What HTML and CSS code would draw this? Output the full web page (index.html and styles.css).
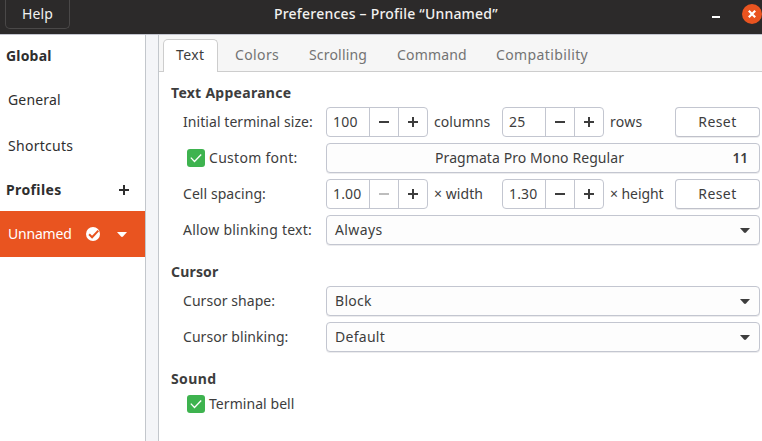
FILE: index.html
```
<!DOCTYPE html>
<html lang="en">
<head>
<meta charset="utf-8">
<title>Preferences – Profile “Unnamed”</title>
<link rel="stylesheet" href="styles.css">
</head>
<body>
<svg class="defs" aria-hidden="true">
  <symbol id="plus" viewBox="0 0 10 10"><path d="M4 0h2v4h4v2H6v4H4V6H0V4h4z"/></symbol>
  <symbol id="minus" viewBox="0 0 10 10"><path d="M0 4h10v2H0z"/></symbol>
  <symbol id="arrow" viewBox="0 0 10 5"><path d="M0 0h10L6 4.5Q5 5.4 4 4.5z"/></symbol>
  <symbol id="check" viewBox="0 0 18 18"><path d="M3.8 8.6l3.7 3.9 6.7-7" fill="none" stroke="#fff" stroke-width="1.3"/></symbol>
</svg>
<div class="window">
  <header class="titlebar">
    <button class="help">Help</button>
    <h1 class="title">Preferences – Profile “Unnamed”</h1>
    <div class="controls">
      <span class="minimize"></span>
      <span class="close"><svg viewBox="0 0 8 8"><path d="M.8.8l6.4 6.4M7.2.8L.8 7.2" stroke="#fff" stroke-width="2.2"/></svg></span>
    </div>
  </header>
  <div class="body">
    <nav class="sidebar">
      <div class="side-head">Global</div>
      <div class="side-item">General</div>
      <div class="side-item ls3">Shortcuts</div>
      <div class="side-head ls4">Profiles<svg class="ic"><use href="#plus"/></svg></div>
      <div class="side-item selected"><span class="profile">Unnamed</span>
        <svg class="default-mark" viewBox="0 0 14 14"><circle cx="7" cy="7" r="7" fill="#fff"/><path d="M3.1 7.2l3 3 6.2-6.6" fill="none" stroke="#e95420" stroke-width="2"/></svg>
        <svg class="arrow"><use href="#arrow"/></svg>
      </div>
    </nav>
    <main class="pane">
      <div class="tabs">
        <div class="tab active ls4">Text</div>
        <div class="tab colors ls4">Colors</div>
        <div class="tab scrolling">Scrolling</div>
        <div class="tab command">Command</div>
        <div class="tab compat ls4">Compatibility</div>
      </div>
      <div class="content">
        <h2 class="ls3">Text Appearance</h2>
        <div class="row">
          <label class="lab ls1">Initial terminal size:</label>
          <div class="spin"><span class="val">100</span><span class="btn"><svg class="ic"><use href="#minus"/></svg></span><span class="btn"><svg class="ic"><use href="#plus"/></svg></span></div>
          <span class="unit ls1">columns</span>
          <div class="spin"><span class="val">25</span><span class="btn"><svg class="ic"><use href="#minus"/></svg></span><span class="btn"><svg class="ic"><use href="#plus"/></svg></span></div>
          <span class="unit ls3">rows</span>
          <button class="reset">Reset</button>
        </div>
        <div class="row">
          <label class="lab checked ls3"><span class="box"><svg><use href="#check"/></svg></span>Custom font:</label>
          <div class="wide font"><span class="fontname">Pragmata Pro Mono Regular</span><span class="size">11</span></div>
        </div>
        <div class="row">
          <label class="lab ls1">Cell spacing:</label>
          <div class="spin"><span class="val">1.00</span><span class="btn off"><svg class="ic"><use href="#minus"/></svg></span><span class="btn"><svg class="ic"><use href="#plus"/></svg></span></div>
          <span class="unit ls1">× width</span>
          <div class="spin"><span class="val">1.30</span><span class="btn"><svg class="ic"><use href="#minus"/></svg></span><span class="btn"><svg class="ic"><use href="#plus"/></svg></span></div>
          <span class="unit ls0">× height</span>
          <button class="reset">Reset</button>
        </div>
        <div class="row">
          <label class="lab blink">Allow blinking text:</label>
          <div class="wide ls4">Always<svg class="arrow"><use href="#arrow"/></svg></div>
        </div>
        <h2>Cursor</h2>
        <div class="row">
          <label class="lab ls1">Cursor shape:</label>
          <div class="wide ls3">Block<svg class="arrow"><use href="#arrow"/></svg></div>
        </div>
        <div class="row">
          <label class="lab ls1">Cursor blinking:</label>
          <div class="wide ls3">Default<svg class="arrow"><use href="#arrow"/></svg></div>
        </div>
        <h2 class="ls4">Sound</h2>
        <div class="row bell">
          <label class="lab checked ls1"><span class="box"><svg><use href="#check"/></svg></span>Terminal bell</label>
        </div>
      </div>
    </main>
  </div>
</div>
</body>
</html>
```
FILE: styles.css
```
* { box-sizing: border-box; }
body {
  margin: 0;
  font: 14px/20px "Noto Sans", "Open Sans", sans-serif;
  letter-spacing: .18px;
  color: #3d3d3d;
  overflow: hidden;
}
.defs { display: none; }
svg { display: block; flex: none; fill: currentColor; }
button { font: inherit; letter-spacing: inherit; color: inherit; padding: 0; }
.window { width: 762px; height: 441px; display: flex; flex-direction: column; background: #fff; }

.titlebar {
  height: 34px; flex: none;
  display: grid; grid-template-columns: 274px 1fr 54px;
  background: #2c2a2a; color: #f2f1f0;
}
.help {
  width: 65px; height: 29px; margin-left: 5px;
  background: none; border: 1px solid #4a4848; border-top: 0; border-radius: 0 0 5px 5px;
  letter-spacing: .08px;
}
.title { margin: 4px 0 0; font-size: 14px; font-weight: 500; letter-spacing: .21px; line-height: 20px; }
.controls { display: flex; padding-left: 4px; }
.minimize { width: 8px; height: 2px; margin: 16px 22px 0 0; background: #fff; }
.close {
  width: 20px; height: 20px; margin-top: 4px; flex: none; border-radius: 50%;
  background: #e95420; display: flex; align-items: center; justify-content: center;
}
.close svg { width: 8px; height: 8px; }

.body { flex: 1; display: flex; background: #f4f5f8; border-top: 1px solid #c3c5cf; }
.sidebar { width: 146px; flex: none; background: #fff; border-right: 1px solid #c3c7cc; color: #2e2e2e; }
.side-head { height: 42px; padding: 0 16px 0 6px; display: flex; align-items: center; justify-content: space-between; font-weight: 700; }
.side-item { height: 46px; padding-left: 8px; display: flex; align-items: center; }
.selected { background: #e95420; color: #fff; }
.profile { width: 78px; letter-spacing: -.2px; }
.default-mark { width: 14px; height: 14px; margin-right: 17px; }

.pane { flex: 1; margin-left: 12px; border-left: 1px solid #c3c7cc; background: #fff; }
.tabs { height: 37px; display: flex; align-items: flex-end; background: #f6f6f6; box-shadow: inset 0 -1px #cdcdcd; color: #737373; }
.tab { height: 33px; line-height: 31px; }
.active {
  width: 55px; margin: 0 17px 0 4px; padding-left: 12px;
  color: #3d3d3d; background: #fff; border: 1px solid #cdcdcd; border-bottom: 0; border-radius: 5px 5px 0 0;
  line-height: 29px;
}
.colors { width: 74px; }
.scrolling { width: 88px; }
.command { width: 99px; }

.content { padding: 10px 2px 0 12px; }
h2 { margin: 0; height: 25px; font-size: 14px; line-height: 22px; font-weight: 700; }
.row { height: 30px; margin-bottom: 6px; padding-left: 12px; display: flex; align-items: center; }
.row + h2 { margin-top: 16px; }
.lab { width: 143px; flex: none; display: flex; align-items: center; }
.checked { padding-left: 4px; }
.box { width: 18px; height: 18px; margin-right: 4px; border-radius: 3px; background: #3eb34f; }
.box svg { width: 18px; height: 18px; }
.spin, .wide, .reset { height: 30px; border: 1px solid #c3c6d0; border-radius: 4px; background: #fff; }
.spin { width: 102px; flex: none; display: flex; }
.val { flex: 1; padding-left: 6px; line-height: 28px; }
.btn { width: 29px; border-left: 1px solid #c3c6d0; display: flex; align-items: center; justify-content: center; }
.off { color: #bdbdbd; }
.ic { width: 10px; height: 10px; }
.unit { width: 74px; padding-left: 6px; flex: none; }
.reset { width: 85px; letter-spacing: .4px; border-bottom-color: #bfc1ca; box-shadow: 0 1px #ececee; }
.spin + .unit + .reset { margin-left: -3px; }
.wide { flex: 1; padding: 0 9px 0 8px; display: flex; align-items: center; justify-content: space-between; background: #fdfdfd; box-shadow: 0 1px #ececee; }
.arrow { width: 10px; height: 5px; }
.font { padding: 0 11px 0 108px; letter-spacing: .08px; }
.size { font-weight: 600; font-size: 13.5px; }
.bell { height: 22px; }
.blink { letter-spacing: .23px; }
.ls0 { letter-spacing: -.08px; }
.ls1 { letter-spacing: .06px; }
.ls3 { letter-spacing: .28px; }
.ls4 { letter-spacing: .38px; }
```
